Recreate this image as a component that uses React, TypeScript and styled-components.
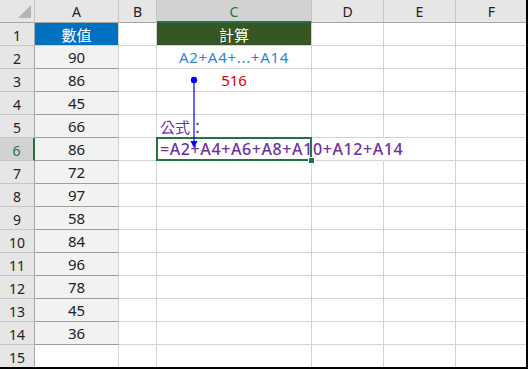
import React from "react";
import styled, { createGlobalStyle, css } from "styled-components";

const Global = createGlobalStyle`
  html, body { margin: 0; padding: 0; background: #fff; }
  body { font-family: "Noto Sans CJK TC", "Noto Sans", sans-serif; }
`;

const FONT = `"Noto Sans", "Noto Sans CJK TC", sans-serif`;
const GREEN = "#217346";

const Frame = styled.div`
  position: relative;
  width: 528px;
  height: 369px;
  box-sizing: border-box;
  border-right: 2px solid #000;
  border-bottom: 2px solid #000;
  overflow: hidden;
  background: #fff;
`;

const Grid = styled.div`
  display: grid;
  grid-template-columns: 35px 84px 38px 155px 72px 72px 72px;
  grid-template-rows: 23px;
  grid-auto-rows: 23px;
  font-family: ${FONT};
`;

const Corner = styled.div`
  box-sizing: border-box;
  background: #e6e6e6;
  border-right: 1px solid #c6c6c6;
  border-bottom: 1px solid #a6a6a6;
  display: flex;
  align-items: flex-end;
  justify-content: flex-end;
  padding: 0 2px 3px 0;
`;

const ColHeader = styled.div<{ $active?: boolean }>`
  box-sizing: border-box;
  background: ${(p) => (p.$active ? "#d2d2d2" : "#e6e6e6")};
  color: ${(p) => (p.$active ? GREEN : "#222")};
  border-right: 1px solid #c6c6c6;
  border-bottom: ${(p) => (p.$active ? `2px solid ${GREEN}` : "1px solid #a6a6a6")};
  display: flex;
  align-items: center;
  justify-content: center;
  font-size: 14px;
  padding-top: 1px;
`;

const RowHeader = styled.div<{ $active?: boolean }>`
  box-sizing: border-box;
  background: ${(p) => (p.$active ? "#d2d2d2" : "#e6e6e6")};
  color: ${(p) => (p.$active ? GREEN : "#222")};
  border-right: ${(p) => (p.$active ? `2px solid ${GREEN}` : "1px solid #a6a6a6")};
  border-bottom: 1px solid #c6c6c6;
  display: flex;
  align-items: center;
  justify-content: center;
  font-size: 14px;
  padding-top: 3px;
`;

type Align = "left" | "center";

const Cell = styled.div<{
  $fill?: string;
  $color?: string;
  $align?: Align;
  $bottom?: string;
  $noRight?: boolean;
  $size?: number;
  $weight?: number;
  $spacing?: number;
  $selected?: boolean;
}>`
  position: relative;
  box-sizing: border-box;
  background: ${(p) => p.$fill ?? "transparent"};
  color: ${(p) => p.$color ?? "#222"};
  border-right: ${(p) => (p.$noRight ? "1px solid transparent" : "1px solid #d4d4d4")};
  border-bottom: 1px solid ${(p) => p.$bottom ?? "#d4d4d4"};
  display: flex;
  align-items: center;
  justify-content: ${(p) => (p.$align === "left" ? "flex-start" : "center")};
  padding: 0 ${(p) => (p.$align === "left" ? "3px" : "0")};
  font-size: ${(p) => p.$size ?? 15}px;
  font-weight: ${(p) => p.$weight ?? 400};
  letter-spacing: ${(p) => p.$spacing ?? 0}px;
  white-space: nowrap;
  overflow: visible;
  ${(p) =>
    p.$selected &&
    css`
      z-index: 1;
      &::after {
        content: "";
        position: absolute;
        left: -1px;
        top: -1px;
        right: -1px;
        bottom: -1px;
        border: 2px solid ${GREEN};
        pointer-events: none;
      }
    `}
`;

const CjkText = styled.span`
  font-family: "Noto Sans CJK TC", sans-serif;
`;

const FillHandle = styled.span`
  position: absolute;
  right: -4px;
  bottom: -4px;
  width: 5px;
  height: 5px;
  background: ${GREEN};
  border: 1px solid #fff;
  z-index: 2;
`;

const Overlay = styled.svg`
  position: absolute;
  left: 0;
  top: 0;
  pointer-events: none;
  z-index: 3;
`;

const values = [90, 86, 45, 66, 86, 72, 97, 58, 84, 96, 78, 45, 36];
const cols = ["A", "B", "C", "D", "E", "F"];

export default function App() {
  const rows: React.ReactNode[] = [];
  for (let r = 1; r <= 15; r++) {
    const active = r === 6;
    rows.push(
      <RowHeader key={`h${r}`} $active={active}>
        {r}
      </RowHeader>
    );
    // A
    if (r === 1) {
      rows.push(
        <Cell key={`a${r}`} $fill="#0070c0" $color="#fff">
          <CjkText>數值</CjkText>
        </Cell>
      );
    } else if (r <= 14) {
      rows.push(
        <Cell key={`a${r}`} $fill="#f2f2f2" $bottom="#9c9c9c">
          {values[r - 2]}
        </Cell>
      );
    } else {
      rows.push(<Cell key={`a${r}`} $fill="#fff" />);
    }
    // B
    rows.push(<Cell key={`b${r}`} $fill="#fff" />);
    // C
    if (r === 1) {
      rows.push(
        <Cell key={`c${r}`} $fill="#375623" $color="#fff">
          <CjkText>計算</CjkText>
        </Cell>
      );
    } else if (r === 2) {
      rows.push(
        <Cell key={`c${r}`} $color="#2e86d6" $size={15} $spacing={0.7}>
          A2+A4+...+A14
        </Cell>
      );
    } else if (r === 3) {
      rows.push(
        <Cell key={`c${r}`} $color="#e00000">
          516
        </Cell>
      );
    } else if (r === 5) {
      rows.push(
        <Cell key={`c${r}`} $align="left" $color="#7030a0">
          <CjkText>公式：</CjkText>
        </Cell>
      );
    } else if (r === 6) {
      rows.push(
        <Cell
          key={`c${r}`}
          $align="left"
          $color="#7030a0"
          $size={16}
          $weight={500}
          $spacing={0.6}
          $selected
        >
          =A2+A4+A6+A8+A10+A12+A14
          <FillHandle />
        </Cell>
      );
    } else {
      rows.push(<Cell key={`c${r}`} />);
    }
    // D E F
    rows.push(<Cell key={`d${r}`} $noRight={active} />);
    rows.push(<Cell key={`e${r}`} />);
    rows.push(<Cell key={`f${r}`} />);
  }

  return (
    <>
      <Global />
      <Frame>
        <Grid>
          <Corner>
            <svg width="14" height="14" viewBox="0 0 14 14">
              <polygon points="13,0 13,13 0,13" fill="#b4b4b4" />
            </svg>
          </Corner>
          {cols.map((c) => (
            <ColHeader key={c} $active={c === "C"}>
              {c}
            </ColHeader>
          ))}
          {rows}
        </Grid>
        <Overlay width="528" height="369" viewBox="0 0 528 369">
          <circle cx="194" cy="80" r="3.2" fill="#0000ff" />
          <line x1="194" y1="80" x2="194" y2="143" stroke="#0000ff" strokeWidth="1.2" />
          <polygon points="190.5,141 197.5,141 194,148" fill="#0000ff" />
        </Overlay>
      </Frame>
    </>
  );
}
